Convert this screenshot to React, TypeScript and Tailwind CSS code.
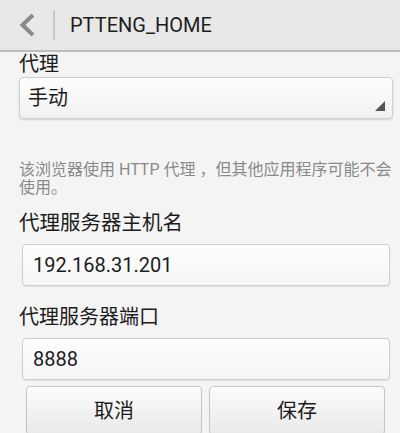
import React from "react";

const font = { fontFamily: "Roboto, 'Noto Sans CJK SC', sans-serif" };

function BackChevron() {
  return (
    <svg width="18" height="24" viewBox="0 0 18 24" className="block">
      <path d="M15 2 L4.5 12 L15 22" fill="none" stroke="#8a8a8a" strokeWidth="4" strokeLinecap="butt" strokeLinejoin="miter" />
    </svg>
  );
}

function Field({ value }: { value: string }) {
  return (
    <div className="ml-[22px] mr-[10px] h-[42px] rounded-[4px] border border-[#cdcdcd] bg-gradient-to-b from-[#fdfdfd] to-[#f6f6f6] shadow-[0_1px_1px_rgba(0,0,0,0.08)] flex items-center pl-[10px] text-[20px] text-[#1c1c1c]">
      {value}
    </div>
  );
}

function Button({ label }: { label: string }) {
  return (
    <button className="flex-1 h-[49px] rounded-[4px] border border-[#c6c6c6] bg-gradient-to-b from-[#fcfcfc] to-[#e9e9e9] shadow-[0_1px_1px_rgba(0,0,0,0.12)] text-[20px] text-[#1c1c1c] flex items-center justify-center">
      {label}
    </button>
  );
}

export default function App() {
  return (
    <div className="w-[400px] h-[433px] overflow-hidden bg-[#f4f4f4]" style={font}>
      <header className="h-[52px] bg-[#e8e8e8] border-b-2 border-[#bdbdbd] flex items-center">
        <div className="ml-[18px] w-[20px] flex items-center">
          <BackChevron />
        </div>
        <div className="ml-[15px] w-[2px] h-[30px] bg-[#c8c8c8]" />
        <div className="ml-[15px] text-[20px] text-[#1e1e1e] leading-none">PTTENG_HOME</div>
      </header>

      <div className="ml-[19px] mt-[2px] text-[20px] leading-[20px] text-[#1c1c1c]">代理</div>

      <div className="ml-[19px] mr-[7px] mt-[3px] h-[42px] rounded-[4px] border border-[#cfcfcf] bg-gradient-to-b from-[#fefefe] to-[#f1f1f1] shadow-[0_1px_2px_rgba(0,0,0,0.15)] flex items-center justify-between pl-[8px] pr-[7px]">
        <span className="text-[20px] text-[#1c1c1c]">手动</span>
        <svg width="10" height="10" viewBox="0 0 10 10" className="self-end mb-[7px]">
          <polygon points="10,0 10,10 0,10" fill="#555555" />
        </svg>
      </div>

      <p className="ml-[19px] mr-[8px] mt-[42px] text-[16px] leading-[18px] text-[#8a8a8a]">
        该浏览器使用 HTTP 代理 ，但其他应用程序可能不会
        <br />
        使用。
      </p>

      <div className="ml-[19px] mt-[16px] text-[20.5px] leading-[21px] text-[#1c1c1c]">代理服务器主机名</div>
      <div className="mt-[10px]">
        <Field value="192.168.31.201" />
      </div>

      <div className="ml-[19px] mt-[21px] text-[20px] leading-[21px] text-[#1c1c1c]">代理服务器端口</div>
      <div className="mt-[10px]">
        <Field value="8888" />
      </div>

      <div className="ml-[26px] mr-[15px] mt-[6px] flex gap-[7px]">
        <Button label="取消" />
        <Button label="保存" />
      </div>
    </div>
  );
}
